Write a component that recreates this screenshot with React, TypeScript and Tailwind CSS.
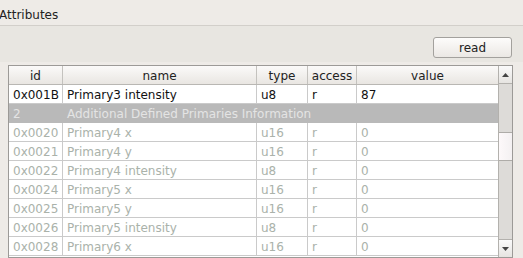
const cols = [
  { key: 'id', label: 'id', w: 'w-[54px]' },
  { key: 'name', label: 'name', w: 'w-[194px]' },
  { key: 'type', label: 'type', w: 'w-[51px]' },
  { key: 'access', label: 'access', w: 'w-[49px]' },
  { key: 'value', label: 'value', w: 'w-[141px]' },
];

type Row = { id: string; name: string; type: string; access: string; value: string; enabled?: boolean };

const rows: Row[] = [
  { id: '0x0020', name: 'Primary4 x', type: 'u16', access: 'r', value: '0' },
  { id: '0x0021', name: 'Primary4 y', type: 'u16', access: 'r', value: '0' },
  { id: '0x0022', name: 'Primary4 intensity', type: 'u8', access: 'r', value: '0' },
  { id: '0x0024', name: 'Primary5 x', type: 'u16', access: 'r', value: '0' },
  { id: '0x0025', name: 'Primary5 y', type: 'u16', access: 'r', value: '0' },
  { id: '0x0026', name: 'Primary5 intensity', type: 'u8', access: 'r', value: '0' },
  { id: '0x0028', name: 'Primary6 x', type: 'u16', access: 'r', value: '0' },
];

function DataRow({ row }: { row: Row }) {
  const vals = [row.id, row.name, row.type, row.access, row.value];
  return (
    <div className={`flex h-[19px] border-b border-[#cacaca] bg-white ${row.enabled ? 'text-[#111]' : 'text-[#aab2aa]'}`}>
      {cols.map((c, i) => (
        <div key={c.key} className={`${c.w} shrink-0 pl-[4px] pt-[1px] leading-[18px] whitespace-nowrap overflow-hidden ${i < 4 ? 'border-r border-[#cacaca]' : ''}`}>
          {vals[i]}
        </div>
      ))}
    </div>
  );
}

export default function App() {
  return (
    <div className="w-[523px] h-[258px] overflow-hidden bg-[#e8e6e1] text-[12px] text-[#222] font-['DejaVu_Sans',sans-serif]">
      <div className="h-[26px] bg-[#eeebe7] border-b border-[#d2cfca] flex items-center -ml-px pt-[4px]">
        Attributes
      </div>

      <div className="h-[36px] flex items-start justify-end pt-[11px] pr-[11px]">
        <button className="w-[79px] h-[21px] rounded-[3px] border border-[#a3a19d] bg-gradient-to-b from-[#fdfcfb] to-[#ebe8e4] text-[12px] text-[#222] leading-[20px]">
          read
        </button>
      </div>

      <div className="bg-[#eeebe7] pt-[3px] pl-[8px] pr-[10px] h-[196px]">
        <div className="flex border border-[#9c9a97] bg-white h-[193px]">
          <div className="flex flex-col w-[489px]">
            <div className="flex h-[19px] border-b border-[#b9b7b3] bg-gradient-to-b from-[#fbfaf9] to-[#e9e6e2]">
              {cols.map((c, i) => (
                <div key={c.key} className={`${c.w} shrink-0 text-center pt-[1px] leading-[18px] ${i < 4 ? 'border-r border-[#c4c2be]' : ''}`}>
                  {c.label}
                </div>
              ))}
            </div>
            <DataRow row={{ id: '0x001B', name: 'Primary3 intensity', type: 'u8', access: 'r', value: '87', enabled: true }} />
            <div className="flex h-[19px] bg-[#b9b9b9] text-[#e4e4e4] pt-[1px] leading-[18px] whitespace-nowrap">
              <div className="w-[54px] pl-[4px]">2</div>
              <div className="pl-[4px]">Additional Defined Primaries Information</div>
            </div>
            {rows.map((r) => (
              <DataRow key={r.id} row={r} />
            ))}
          </div>

          <div className="w-[14px] border-l border-[#b3b1ad] bg-[#dddbd8] flex flex-col">
            <div className="h-[18px] bg-gradient-to-b from-[#fafafa] to-[#e6e4e1] border-b border-[#b3b1ad] flex items-center justify-center">
              <svg width="7" height="4" viewBox="0 0 7 4"><polygon points="0,4 7,4 3.5,0" fill="#444" /></svg>
            </div>
            <div className="h-[48px]" />
            <div className="h-[29px] bg-gradient-to-r from-[#fdf9fa] to-[#f4f1f2] border-y border-[#aeaca8]" />
            <div className="flex-1" />
            <div className="h-[18px] bg-gradient-to-b from-[#fafafa] to-[#e6e4e1] border-t border-[#b3b1ad] flex items-center justify-center">
              <svg width="7" height="4" viewBox="0 0 7 4"><polygon points="0,0 7,0 3.5,4" fill="#444" /></svg>
            </div>
          </div>
        </div>
      </div>
    </div>
  );
}
